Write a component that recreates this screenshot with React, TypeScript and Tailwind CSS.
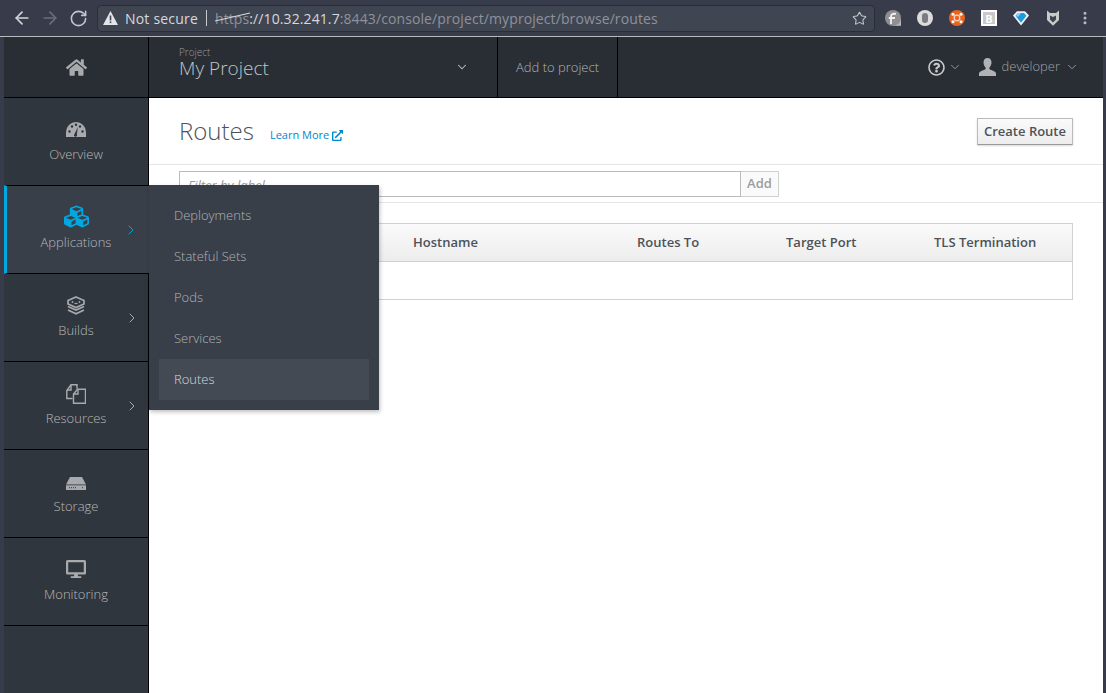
import {ArrowLeft, ArrowRight, ChevronDown, ChevronRight, EllipsisVertical, RotateCw, Star} from "lucide-react";
import {FaCubes, FaDesktop, FaExternalLinkAlt, FaHome, FaRegQuestionCircle} from "react-icons/fa";
import type {ReactNode} from "react";

function OverviewIcon() {
    return (
        <svg width="20" height="15" viewBox="0 0 20 15" className="mb-[3px]">
            <path d="M0 15v-5a10 10 0 0 1 20 0v5z" fill="#a8aaad"/>
            <g fill="#30363e">
                <circle cx="3.500" cy="9.500" r="1.200"/>
                <circle cx="6" cy="4.500" r="1.200"/>
                <circle cx="10" cy="2.800" r="1.200"/>
                <circle cx="14" cy="4.500" r="1.200"/>
                <circle cx="16.500" cy="9.500" r="1.200"/>
                <path d="M11.800 5 10.900 12.500a1.500 1.500 0 1 1-2.300-.6z"/>
            </g>
        </svg>
    );
}

function BuildsIcon() {
    return (
        <svg width="20" height="19" viewBox="0 0 20 19" fill="none" stroke="#a8aaad" strokeWidth="1.700" className="mb-[1px]">
            <path d="M10 1 18 4.500v3.500L10 11.500 2 8V4.500z"/>
            <path d="M2 10.500 10 14l8-3.500"/>
            <path d="M2 14 10 17.800 18 14"/>
            <circle cx="6.500" cy="6" r="0.900" fill="#a8aaad" stroke="none"/>
            <circle cx="13.500" cy="6" r="0.900" fill="#a8aaad" stroke="none"/>
            <path d="M8.500 7.500h3" strokeWidth="1.200"/>
        </svg>
    );
}

function ResourcesIcon() {
    return (
        <svg width="20" height="20" viewBox="0 0 20 20" fill="none" stroke="#a8aaad" strokeWidth="1.400">
            <path d="M6.500 14.500H.8V6.500L5 .8h6v4"/>
            <path d="M5 1v5H1"/>
            <path d="M7.500 19.300V10L11.500 5.300h8v14z"/>
            <path d="M7.500 10h4.500V5.300"/>
        </svg>
    );
}

function StorageIcon() {
    return (
        <svg width="20" height="13" viewBox="0 0 20 13" className="mb-[2px]">
            <path d="M4 0h12l4 7.500H0z" fill="#a8aaad"/>
            <rect x="0" y="8.300" width="20" height="4.700" fill="#a8aaad"/>
            <path d="M3 10.700h7M16 10.700h2" stroke="#30363d" strokeWidth="1" strokeDasharray="1 1"/>
        </svg>
    );
}

function UserIcon() {
    return (
        <svg width="17" height="18" viewBox="0 0 17 18" fill="#b0b2b5">
            <path d="M8.500 0c2.600 0 4 1.800 4 4.600 0 2-.9 3.900-2 5-.4.500-.3 1.500.5 1.900 2.300 1 5.500 1.800 6 3.500V18H0v-3c.5-1.700 3.700-2.500 6-3.500.8-.4.900-1.400.5-1.900-1.100-1.100-2-3-2-5C4.500 1.800 5.900 0 8.500 0z"/>
        </svg>
    );
}

function SideItem({label, icon, arrow, active}: {label: string; icon: ReactNode; arrow?: boolean; active?: boolean}) {
    return (
        <div className={`relative flex flex-col items-center border-b border-black pt-[20px] ${active ? "h-[89px] bg-[#393f49] border-t border-t-black -mt-px border-l-[3px] border-l-[#00a8e1] pr-[8px] w-[149px] z-10" : "h-[88px] bg-[#30363e]"}`}>
            <div className="h-[22px] flex items-end justify-center">{icon}</div>
            <span className="mt-[5px] text-[13px] leading-[18px] font-light text-[#b4b6b9] whitespace-nowrap">{label}</span>
            {arrow && (
                <ChevronRight size={16} strokeWidth={1.500}
                              className={`absolute top-[36px] ${active ? "left-[116px] text-[#00a8e1]" : "left-[120px] text-[#a8aaad]"}`}/>
            )}
        </div>
    );
}

function FlyoutLink({label, selected}: {label: string; selected?: boolean}) {
    return (
        <div className={`h-[41px] flex items-center pl-[15px] text-[13px] font-light ${selected ? "bg-[#444a54] text-[#d6d8da]" : "text-[#b0b2b6]"}`}>
            {label}
        </div>
    );
}

function Extensions() {
    return (
        <div className="flex items-center gap-[16px] ml-[10px] h-full">
            <svg width="16" height="16" viewBox="0 0 16 16">
                <path d="M8 0a8 8 0 0 1 8 8v8H8A8 8 0 0 1 8 0z" fill="#8f8f8f"/>
                <path d="M8.500 15.500H16V8c0 3-2 7-7.500 7.500z" fill="#b5b5b5"/>
                <path d="M6 14V6.500C6 4.300 7.500 3.500 11 3.800M3.800 8H10" fill="none" stroke="#f2f2f2" strokeWidth="1.800"/>
            </svg>
            <div className="w-[16px] h-[16px] rounded-full bg-[#dcdcdc] flex items-center justify-center">
                <div className="w-[6px] h-[10px] rounded-full bg-[#7b7c80]"/>
            </div>
            <svg width="16" height="16" viewBox="0 0 16 16">
                <circle cx="8" cy="8" r="8" fill="#e8641f"/>
                <circle cx="8" cy="8" r="2.800" fill="none" stroke="#f5d4c0" strokeWidth="1.300"/>
                <circle cx="4" cy="4.200" r="1.500" fill="#fff"/>
                <circle cx="12" cy="4.200" r="1.500" fill="#fff"/>
                <circle cx="4" cy="11.800" r="1.500" fill="#fff"/>
                <circle cx="12" cy="11.800" r="1.500" fill="#fff"/>
            </svg>
            <div className="w-[16px] h-[16px] bg-white flex items-center justify-center">
                <div className="w-[12px] h-[12px] bg-[#c9c9c9] flex items-center justify-center text-white text-[11px] font-bold leading-none">B</div>
            </div>
            <svg width="16" height="16" viewBox="0 0 16 16">
                <path d="M4 1.200h8L16 5.500 8 15.500 0 5.500z" fill="#f1f5f8"/>
                <path d="M5 3h6L13.500 5.800 8 12.800 2.500 5.800z" fill="#1e9be0"/>
                <path d="M5 3h3L5.500 6.500H2.800z" fill="#8fd0f2"/>
            </svg>
            <svg width="16" height="16" viewBox="0 0 16 16">
                <path d="M2 .5l3 2.500h6l3-2.500V10l-6 5.800L2 10z" fill="#c9cbc6"/>
                <path d="M5 5.500 8 7l3-1.500V9.500L8 12.500 5 9.500z" fill="#3f4452"/>
            </svg>
            <EllipsisVertical size={16} strokeWidth={2.500} className="text-[#b9bcc4]"/>
        </div>
    );
}

function ChromeBar() {
    return (
        <div className="h-[37px] shrink-0 flex items-center pl-[12px] border-b border-[#b8b9bb] bg-[#383c4a]">
            <ArrowLeft size={20} strokeWidth={2} className="text-[#d3d5da] shrink-0"/>
            <ArrowRight size={20} strokeWidth={2} className="text-[#6a6e7a] ml-[8px] shrink-0"/>
            <RotateCw size={19} strokeWidth={2} className="text-[#c4c6cc] ml-[9px] shrink-0"/>
            <div className="ml-[9px] h-[27px] w-[778px] shrink-0 flex items-center rounded-[4px] border border-[#2b2e39] bg-[#404552] pl-[5px] pr-[7px] text-[14px] text-[#d7d9dd]">
                <svg width="15" height="14" viewBox="0 0 15 14">
                    <path d="M7.500 0 15 14H0z" fill="#e4e5e8"/>
                    <rect x="6.700" y="4.500" width="1.600" height="5" fill="#404552"/>
                    <rect x="6.700" y="10.500" width="1.600" height="1.600" fill="#404552"/>
                </svg>
                <span className="ml-[7px] whitespace-nowrap tracking-[0.2px]">Not secure</span>
                <div className="ml-[8px] mr-[8px] w-px h-[16px] bg-[#c8c9cd]"/>
                <span className="relative text-[#8f929b] whitespace-nowrap tracking-[0.1px]">
                    https
                    <svg width="36" height="10" viewBox="0 0 36 10" className="absolute left-0 top-[4px]">
                        <path d="M0 9 35 1" stroke="#d7d9dd" strokeWidth="1.200"/>
                    </svg>
                </span>
                <span className="whitespace-nowrap tracking-[0.1px]">://10.32.241.7</span>
                <span className="text-[#8f929b] whitespace-nowrap tracking-[0.1px]">:8443/console/project/myproject/browse/routes</span>
                <Star size={15} strokeWidth={1.700} className="ml-auto text-[#c4c6cc]"/>
            </div>
            <Extensions/>
        </div>
    );
}

function TopNav() {
    return (
        <div className="h-[61px] shrink-0 flex bg-[#292e34] border-b border-black">
            <div className="w-[145px] border-r border-black flex items-center justify-center">
                <FaHome size={21} className="text-[#a8aaad]"/>
            </div>
            <div className="w-[349px] pl-[30px] pr-[28px] border-r border-black flex items-center justify-between">
                <div className="flex flex-col pb-[8px]">
                    <span className="text-[10px] leading-[11px] font-light text-[#9a9c9f]">Project</span>
                    <span className="text-[19px] leading-[21px] text-[#c2c4c6] font-light">My Project</span>
                </div>
                <ChevronDown size={14} strokeWidth={1.800} className="text-[#c2c4c6]"/>
            </div>
            <div className="w-[120px] border-r border-black flex items-center justify-center text-[13px] font-light text-[#b0b2b6] pt-px">
                Add to project
            </div>
            <div className="flex-1 flex items-center justify-end pr-[24px]">
                <FaRegQuestionCircle size={17} className="text-[#c8cacc]"/>
                <ChevronDown size={14} strokeWidth={1.500} className="text-[#a0a3a7] ml-[3px]"/>
                <div className="ml-[17px]"><UserIcon/></div>
                <span className="ml-[6px] text-[13px] font-light text-[#a0a3a7]">developer</span>
                <ChevronDown size={14} strokeWidth={1.500} className="text-[#a0a3a7] ml-[5px]"/>
            </div>
        </div>
    );
}

function Sidebar() {
    return (
        <div className="relative w-[145px] shrink-0 bg-[#30363e] border-r border-black">
            <SideItem label="Overview" icon={<OverviewIcon/>}/>
            <SideItem label="Applications" icon={<FaCubes size={25} className="text-[#00a8e1] mb-[-1px]"/>} arrow active/>
            <SideItem label="Builds" icon={<BuildsIcon/>} arrow/>
            <SideItem label="Resources" icon={<ResourcesIcon/>} arrow/>
            <SideItem label="Storage" icon={<StorageIcon/>}/>
            <SideItem label="Monitoring" icon={<FaDesktop size={20} className="text-[#a8aaad] mb-[1px]"/>}/>
            <div className="absolute left-[145px] top-[87px] z-20 w-[230px] h-[225px] bg-[#393f49] shadow-[1px_2px_4px_rgba(0,0,0,0.25)] p-[10px]">
                <FlyoutLink label="Deployments"/>
                <FlyoutLink label="Stateful Sets"/>
                <FlyoutLink label="Pods"/>
                <FlyoutLink label="Services"/>
                <FlyoutLink label="Routes" selected/>
            </div>
        </div>
    );
}

function Content() {
    return (
        <div className="flex-1 bg-white flex flex-col min-w-0">
            <div className="h-[67px] shrink-0 border-b border-[#e5e5e5] flex items-center pl-[30px] pr-[30px]">
                <span className="text-[24px] font-light text-[#4d5258] leading-none mb-[1px]">Routes</span>
                <span className="ml-[16px] mt-[9px] text-[11px] text-[#0088ce] flex items-center gap-[3px]">
                    Learn More
                    <FaExternalLinkAlt size={11}/>
                </span>
                <button className="ml-auto h-[27px] w-[96px] pt-px border border-[#bbb] border-b-[#999] rounded-[1px] bg-gradient-to-b from-[#fafafa] to-[#ededed] text-[13px] font-[550] text-[#4d5258] shadow-[0_1px_2px_rgba(0,0,0,0.15)]">
                    Create Route
                </button>
            </div>
            <div className="h-[38px] shrink-0 border-b border-[#e5e5e5] flex items-center pl-[30px]">
                <div className="h-[26px] w-[562px] border border-[#bbb] text-[13px] italic text-[#999] pl-[8px] leading-[26px]">Filter by label</div>
                <div className="h-[26px] w-[38px] border border-l-0 border-[#d1d1d1] bg-[#fafafa] flex items-center justify-center text-[13px] font-[550] text-[#9c9c9c]">Add</div>
            </div>
            <div className="ml-[30px] mr-[30px] mt-[20px] border border-[#d1d1d1] h-[77px]">
                <div className="h-[38px] border-b border-[#d1d1d1] bg-gradient-to-b from-[#fafafa] to-[#ededed] flex items-center text-[13px] font-[550] text-[#4d5258]">
                    <span className="ml-[233px] w-[224px]">Hostname</span>
                    <span className="w-[149px]">Routes To</span>
                    <span className="w-[148px]">Target Port</span>
                    <span>TLS Termination</span>
                </div>
            </div>
        </div>
    );
}

export default function App() {
    return (
        <div className="w-[1106px] h-[693px] overflow-hidden flex flex-col bg-[#383c4a] font-['Open_Sans',sans-serif]">
            <ChromeBar/>
            <div className="flex-1 min-h-0 flex flex-col ml-[4px] mr-[3px]">
                <TopNav/>
                <div className="flex-1 min-h-0 flex">
                    <Sidebar/>
                    <Content/>
                </div>
            </div>
        </div>
    );
}
